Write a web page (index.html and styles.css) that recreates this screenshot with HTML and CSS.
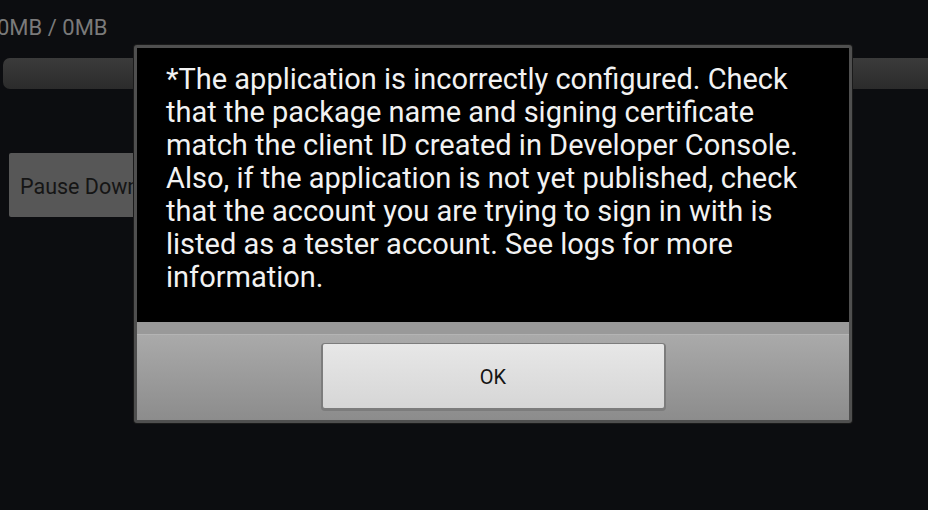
FILE: index.html
```html
<!DOCTYPE html>
<html lang="en">
<head>
  <meta charset="UTF-8" />
  <title>Download</title>
  <link rel="stylesheet" href="styles.css">
</head>
<body>
  <div class="screen">
    <div class="progress-label">0MB / 0MB</div>
    <div class="progress-bar"></div>
    <button class="pause-btn">Pause Download</button>
  </div>

  <div class="dialog">
    <div class="dialog-body">
      <p class="dialog-message">*The application is incorrectly configured. Check that the package name and signing certificate match the client ID created in Developer Console. Also, if the application is not yet published, check that the account you are trying to sign in with is listed as a tester account. See logs for more information.</p>
    </div>
    <div class="dialog-actions">
      <button class="ok-btn">OK</button>
    </div>
  </div>
</body>
</html>
```

FILE: styles.css
```css
body {
  margin: 0;
  padding: 0;
  width: 928px;
  height: 510px;
  overflow: hidden;
  background: #0c0d10;
  font-family: Roboto, 'Noto Sans', sans-serif;
  position: relative;
}

.screen {
  display: flex;
  flex-direction: column;
  align-items: flex-start;
}

.progress-label {
  margin: 14px 0 0 -3px;
  font-size: 22px;
  line-height: 28px;
  color: #7a7a7a;
}

.progress-bar {
  margin: 16px 0 0 3px;
  width: 940px;
  height: 31px;
  border-radius: 7px;
  background: linear-gradient(#3b3b3b, #2b2b2b);
}

.pause-btn {
  margin: 64px 0 0 9px;
  width: 190px;
  height: 64px;
  padding: 2px 0 0 11px;
  text-align: left;
  border: none;
  border-radius: 2px;
  background: #575757;
  color: #151515;
  font-family: Roboto, sans-serif;
  font-size: 21.5px;
  white-space: nowrap;
}

.dialog {
  position: absolute;
  left: 134px;
  top: 45px;
  width: 712px;
  border: 3px solid #4f4f4f;
  border-radius: 3px;
  background: #000;
  box-shadow: 0 0 0 1px #1a1a1a;
}

.dialog-body {
  height: 274px;
  padding: 15px 0 0 29px;
  box-sizing: border-box;
}

.dialog-message {
  margin: 0;
  width: 670px;
  font-size: 29px;
  line-height: 33px;
  color: #f2f2f2;
}

.dialog-actions {
  height: 98px;
  box-sizing: border-box;
  border-top: 12px solid #999;
  background: linear-gradient(#aaaaaa, #8c8c8c);
  box-shadow: inset 0 1px 0 #b4b4b4;
  display: flex;
  justify-content: center;
  padding-top: 10px;
}

.ok-btn {
  width: 341px;
  height: 64px;
  padding-top: 2px;
  border: none;
  border-radius: 2px;
  background: linear-gradient(#e7e7e7, #d6d6d6);
  box-shadow: 0 1px 0 2px #7c7c7c;
  color: #151515;
  font-family: Roboto, sans-serif;
  font-size: 20px;
}
```
